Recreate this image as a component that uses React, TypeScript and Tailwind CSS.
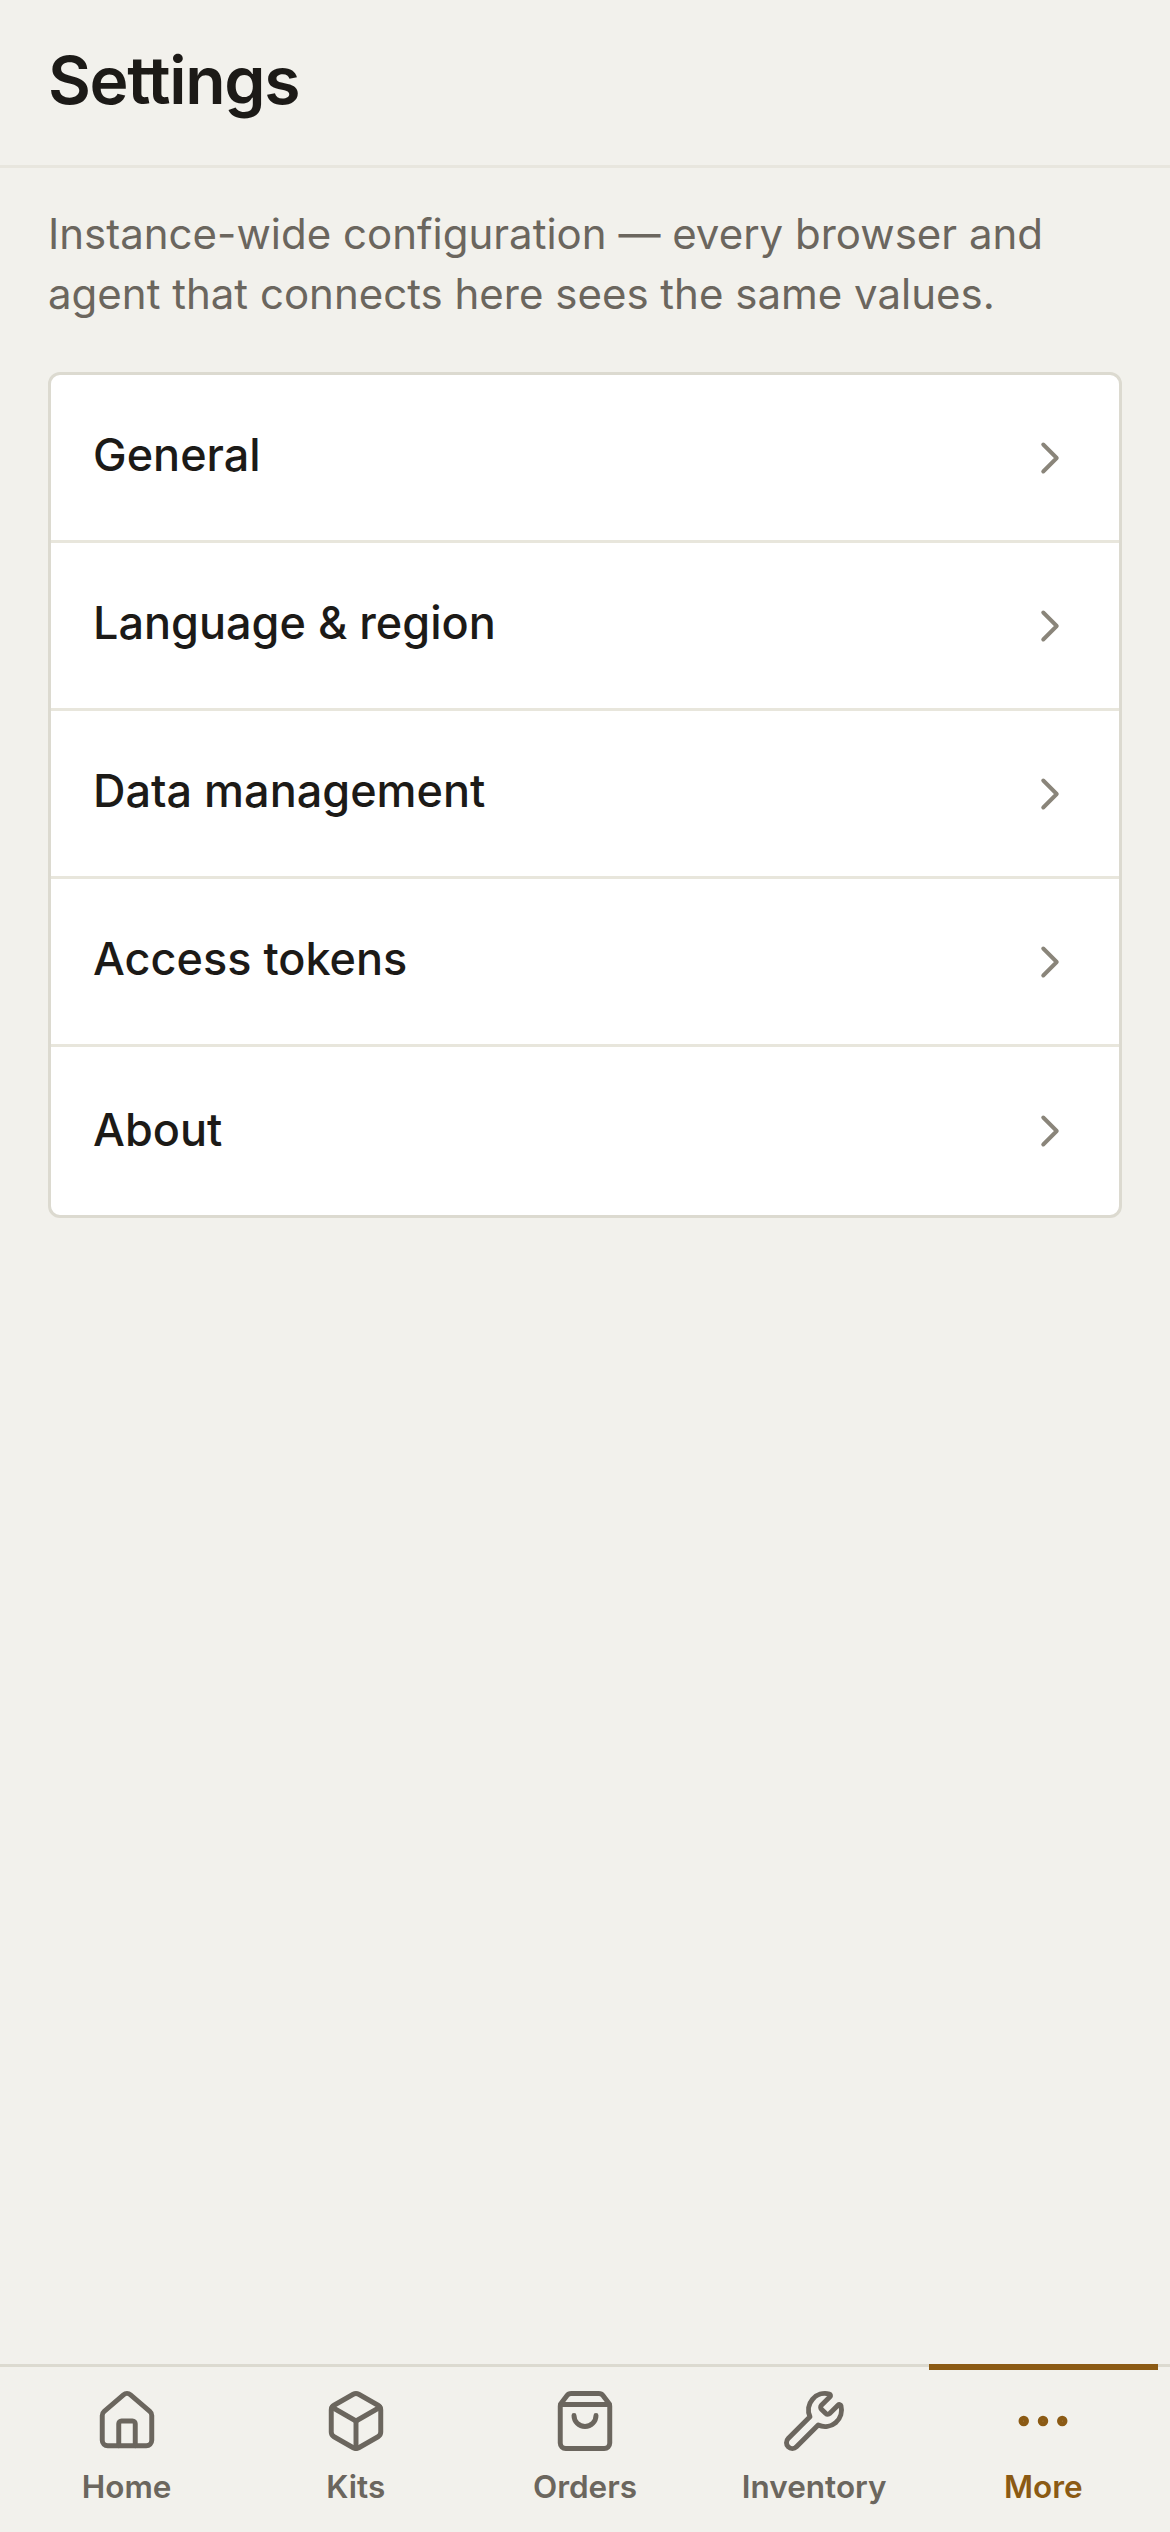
import { Box, ChevronRight, Ellipsis, House, ShoppingBag, Wrench } from "lucide-react";

const rows = ["General", "Language & region", "Data management", "Access tokens", "About"];
const tabs = [
  { label: "Home", Icon: House },
  { label: "Kits", Icon: Box },
  { label: "Orders", Icon: ShoppingBag },
  { label: "Inventory", Icon: Wrench },
  { label: "More", Icon: Ellipsis, active: true },
];

export default function App() {
  return (
    <div className="flex h-[2532px] w-[1170px] flex-col overflow-hidden bg-[#f2f1ec] font-['Inter',sans-serif]">
      <header className="flex h-[168px] shrink-0 items-center border-b-[3px] border-[#e8e6de] px-[48px] pb-[6px]">
        <h1 className="text-[66px] leading-[84px] font-semibold tracking-[-1.32px] text-[#1c1a17]">Settings</h1>
      </header>
      <main className="flex-1 px-[48px] pt-[36px]">
        <p className="text-[42px] leading-[60px] text-[#6b665e]">
          Instance-wide configuration — every browser and
          <br />
          agent that connects here sees the same values.
        </p>
        <div className="mt-[48px] overflow-hidden rounded-[12px] border-[3px] border-[#dcdad0] bg-white">
          {rows.map((row, i) => (
            <div
              key={row}
              className={
                i < rows.length - 1
                  ? "flex h-[168px] items-center justify-between border-b-[3px] border-[#e8e6dc] px-[42px]"
                  : "flex h-[168px] items-center justify-between px-[42px]"
              }
            >
              <span
                className={
                  i < rows.length - 1
                    ? "pb-[6px] text-[45px] leading-[60px] font-medium text-[#1c1a17]"
                    : "pb-[3px] text-[45px] leading-[60px] font-medium text-[#1c1a17]"
                }
              >
                {row}
              </span>
              <ChevronRight size={54} strokeWidth={1.75} className="text-[#8a857a]" />
            </div>
          ))}
        </div>
      </main>
      <nav className="flex h-[168px] shrink-0 border-t-[3px] border-[#dcdad0] px-[12px]">
        {tabs.map(({ label, Icon, active }) => (
          <div key={label} className="relative flex flex-1 flex-col items-center pt-[21px]">
            {active && <div className="absolute -top-[3px] right-0 left-0 h-[6px] bg-[#8b5a14]" />}
            <Icon size={66} strokeWidth={1.8} className={active ? "text-[#8b5a14]" : "text-[#6b665e]"} />
            <span
              className={
                active
                  ? "mt-[12px] text-[31.5px] leading-[42px] font-semibold text-[#8b5a14]"
                  : "mt-[12px] text-[31.5px] leading-[42px] font-semibold text-[#6b665e]"
              }
            >
              {label}
            </span>
          </div>
        ))}
      </nav>
    </div>
  );
}
